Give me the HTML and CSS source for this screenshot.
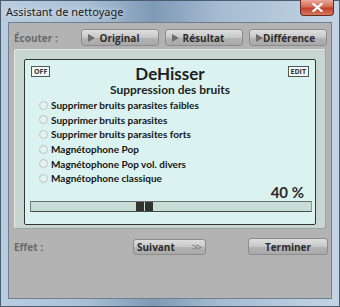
FILE: index.html
```html
<!DOCTYPE html>
<html lang="fr">
<head>
    <meta charset="UTF-8">
    <title>Assistant de nettoyage</title>
    <link rel="stylesheet" href="styles.css">
</head>
<body>

<div class="window">
    <div class="titlebar">
        <span class="title">Assistant de nettoyage</span>
        <button class="close" aria-label="Fermer">
            <svg width="11" height="9" viewBox="0 0 11 9"><path d="M1.5 1 L9.5 8 M9.5 1 L1.5 8" stroke="#fff" stroke-width="2.2" stroke-linecap="square"/></svg>
        </button>
    </div>

    <div class="client">
        <div class="listen-row">
            <span class="label">Écouter :</span>
            <button class="btn play"><span class="tri"></span><span class="txt">Original</span></button>
            <button class="btn play"><span class="tri"></span><span class="txt">Résultat</span></button>
            <button class="btn play"><span class="tri"></span><span class="txt">Différence</span></button>
        </div>

        <div class="rack">
            <div class="plugin">
                <div class="plugin-head">
                    <span class="tag">OFF</span>
                    <div class="plugin-title">
                        <div class="name">DeHisser</div>
                        <div class="sub">Suppression des bruits</div>
                    </div>
                    <span class="tag tag-right">EDIT</span>
                </div>
                <ul class="presets">
                    <li><span class="radio"></span>Supprimer bruits parasites faibles</li>
                    <li><span class="radio"></span>Supprimer bruits parasites</li>
                    <li><span class="radio"></span>Supprimer bruits parasites forts</li>
                    <li><span class="radio"></span>Magnétophone Pop</li>
                    <li><span class="radio"></span>Magnétophone Pop vol. divers</li>
                    <li><span class="radio"></span>Magnétophone classique</li>
                </ul>
                <div class="amount">40 %</div>
                <div class="slider">
                    <div class="thumb" style="left: 105px"><span></span><span></span></div>
                </div>
            </div>
        </div>

        <div class="effect-row">
            <span class="label">Effet :</span>
            <button class="btn next"><span>Suivant</span><span class="arrows">&gt;&gt;</span></button>
            <button class="btn finish">Terminer</button>
        </div>
    </div>
</div>

</body>
</html>
```

FILE: styles.css
```css
body {
    margin: 0;
    width: 340px;
    height: 307px;
    overflow: hidden;
    font-family: Lato, "Open Sans", sans-serif;
}
.window {
    width: 340px;
    height: 307px;
    box-sizing: border-box;
    padding: 0 7px 7px 7px;
    background: linear-gradient(90deg, #b9cde0 0%, #a9c0d6 25%, #7f9ab5 45%, #a6bcd2 65%, #c3d4e4 100%);
    border: 1px solid #4b5d70;
    display: flex;
    flex-direction: column;
}
.titlebar {
    height: 21px;
    display: flex;
    align-items: flex-start;
    justify-content: space-between;
}
.title {
    font-family: "Noto Sans", sans-serif;
    font-size: 11px;
    color: #1b1b1b;
    margin-top: 3px;
    margin-left: -2px;
    text-shadow: 0 0 6px rgba(255, 255, 255, 0.9);
}
.close {
    width: 34px;
    height: 16px;
    margin-top: -1px;
    margin-right: -2px;
    border: 1px solid #6a2b22;
    border-top: none;
    border-radius: 0 0 4px 4px;
    background: linear-gradient(180deg, #e9a99a 0%, #d46b55 45%, #c0412b 55%, #d7785e 100%);
    display: flex;
    align-items: center;
    justify-content: center;
    padding: 0;
}
.client {
    flex: 1;
    background-color: #b3b3b3;
    border: 1px solid #6f7f8f;
    display: flex;
    flex-direction: column;
}
.label {
    font-family: "Open Sans", sans-serif;
    font-weight: bold;
    font-size: 10px;
    color: #6a6a6a;
}
.listen-row {
    display: flex;
    align-items: center;
    gap: 6px;
    margin-top: 6px;
    padding-left: 5px;
}
.listen-row .label {
    width: 61px;
}
.btn {
    height: 17px;
    box-sizing: border-box;
    border: 1px solid #8c8c8c;
    border-radius: 3px;
    background: linear-gradient(180deg, #dedede 0%, #c8c8c8 50%, #b4b4b4 51%, #a9a9a9 100%);
    font-family: "Open Sans", sans-serif;
    font-weight: bold;
    font-size: 10px;
    color: #2c2c2c;
    padding: 0;
    display: flex;
    align-items: center;
}
.play {
    width: 78px;
    padding: 0 14px 0 6px;
}
.tri {
    width: 0;
    height: 0;
    border-top: 4px solid transparent;
    border-bottom: 4px solid transparent;
    border-left: 7px solid #6d6d6d;
}
.play .txt {
    flex: 1;
    text-align: center;
}
.rack {
    margin: 3px 0 0 5px;
    width: 312px;
    height: 180px;
    box-sizing: border-box;
    background-color: #c8d5d1;
    border: 1px solid #e2e9e6;
    border-right-color: #9aa5a1;
    border-bottom-color: #9aa5a1;
    border-radius: 3px;
    padding: 9px 9px 4px 9px;
}
.plugin {
    height: 166px;
    box-sizing: border-box;
    background-color: #dbf3f0;
    border: 1px solid #2c3a31;
    border-radius: 2px;
    padding: 6px 5px 0 5px;
    position: relative;
}
.plugin-head {
    display: grid;
    grid-template-columns: 1fr auto 1fr;
    align-items: start;
}
.tag {
    justify-self: start;
    margin-left: 1px;
    font-family: "Open Sans", sans-serif;
    font-size: 7px;
    font-weight: bold;
    color: #333;
    border: 1px solid #555;
    background-color: #eef8f6;
    padding: 0 2px;
    line-height: 9px;
}
.tag-right {
    justify-self: end;
    margin-left: 0;
    margin-right: 1px;
}
.plugin-title {
    text-align: center;
    color: #1e1e1e;
}
.name {
    font-size: 17px;
    font-weight: bold;
    line-height: 16px;
}
.sub {
    font-size: 12px;
    font-weight: bold;
    line-height: 15px;
}
.presets {
    list-style: none;
    margin: 1px 0 0 0;
    padding: 0 0 0 9px;
}
.presets li {
    display: flex;
    align-items: center;
    height: 14.6px;
    font-size: 10px;
    font-weight: bold;
    color: #151515;
}
.radio {
    width: 7px;
    height: 7px;
    border-radius: 50%;
    border: 1px solid #b9c4c2;
    background-color: #e6f2f0;
    margin-right: 3px;
}
.amount {
    text-align: right;
    font-size: 15px;
    font-weight: bold;
    color: #2a2a2a;
    line-height: 16px;
    margin-top: -2px;
    padding-right: 6px;
}
.slider {
    margin-top: 1px;
    width: 282px;
    height: 11px;
    box-sizing: border-box;
    background-color: #c9ddd7;
    border-top: 1px solid #67716d;
    border-bottom: 1px solid #444c48;
    border-left: 1px solid #6f7a76;
    border-right: 1px solid #8f9a96;
    position: relative;
}
.thumb {
    position: absolute;
    top: 0;
    display: flex;
    gap: 1px;
}
.thumb span {
    width: 8px;
    height: 9px;
    background-color: #30332f;
}
.effect-row {
    display: flex;
    align-items: center;
    margin-top: 9px;
    padding-left: 5px;
}
.effect-row .label {
    width: 119px;
}
.next {
    width: 73px;
    height: 16px;
    justify-content: space-between;
    padding: 0 5px 0 3px;
}
.arrows {
    font-weight: normal;
    color: #777;
    font-size: 11px;
    letter-spacing: -2px;
}
.finish {
    width: 80px;
    margin-left: 42px;
    justify-content: center;
}
```
